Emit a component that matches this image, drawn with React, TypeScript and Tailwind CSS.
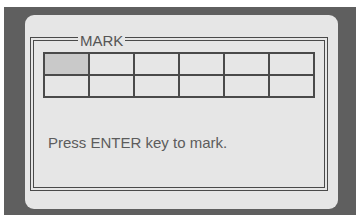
export default function App() {
  const cells = Array.from({ length: 12 }, (_, i) => i);

  return (
    <div
      className="w-[359px] h-[215px] bg-white pt-[7px] pl-[4px] pr-[3px]"
      style={{ fontFamily: '"Liberation Sans", Arial, sans-serif' }}
    >
      <div className="h-full bg-[#5f5f5f] pl-[21px] pt-[8px] pr-[18px] pb-[6px]">
        <div className="h-full rounded-[9px] bg-[#e6e6e6] pl-[5px] pt-[22px] pr-[10px] pb-[18px]">
          {/* double frame */}
          <div className="relative h-full border border-[#4a4a4a] p-[2px]">
            <div className="h-full border border-[#4a4a4a] pl-[9px] pt-[11px]">
              <div className="grid w-max grid-cols-6 border-l-2 border-t-2 border-[#4a4a4a]">
                {cells.map((i) => (
                  <div
                    key={i}
                    className={`w-[45px] h-[22px] border-r-2 border-b-2 border-[#4a4a4a] ${
                      i === 0 ? "bg-[#c9c9c9]" : "bg-[#e6e6e6]"
                    }`}
                  />
                ))}
              </div>
              <p className="mt-[36px] pl-[5px] text-[15px] leading-[17px] text-[#5c5c5c]">
                Press ENTER key to mark.
              </p>
            </div>
            <span className="absolute left-[47px] top-[-6px] bg-[#e6e6e6] px-[2px] text-[15px] leading-[17px] text-[#555555]">
              MARK
            </span>
          </div>
        </div>
      </div>
    </div>
  );
}
